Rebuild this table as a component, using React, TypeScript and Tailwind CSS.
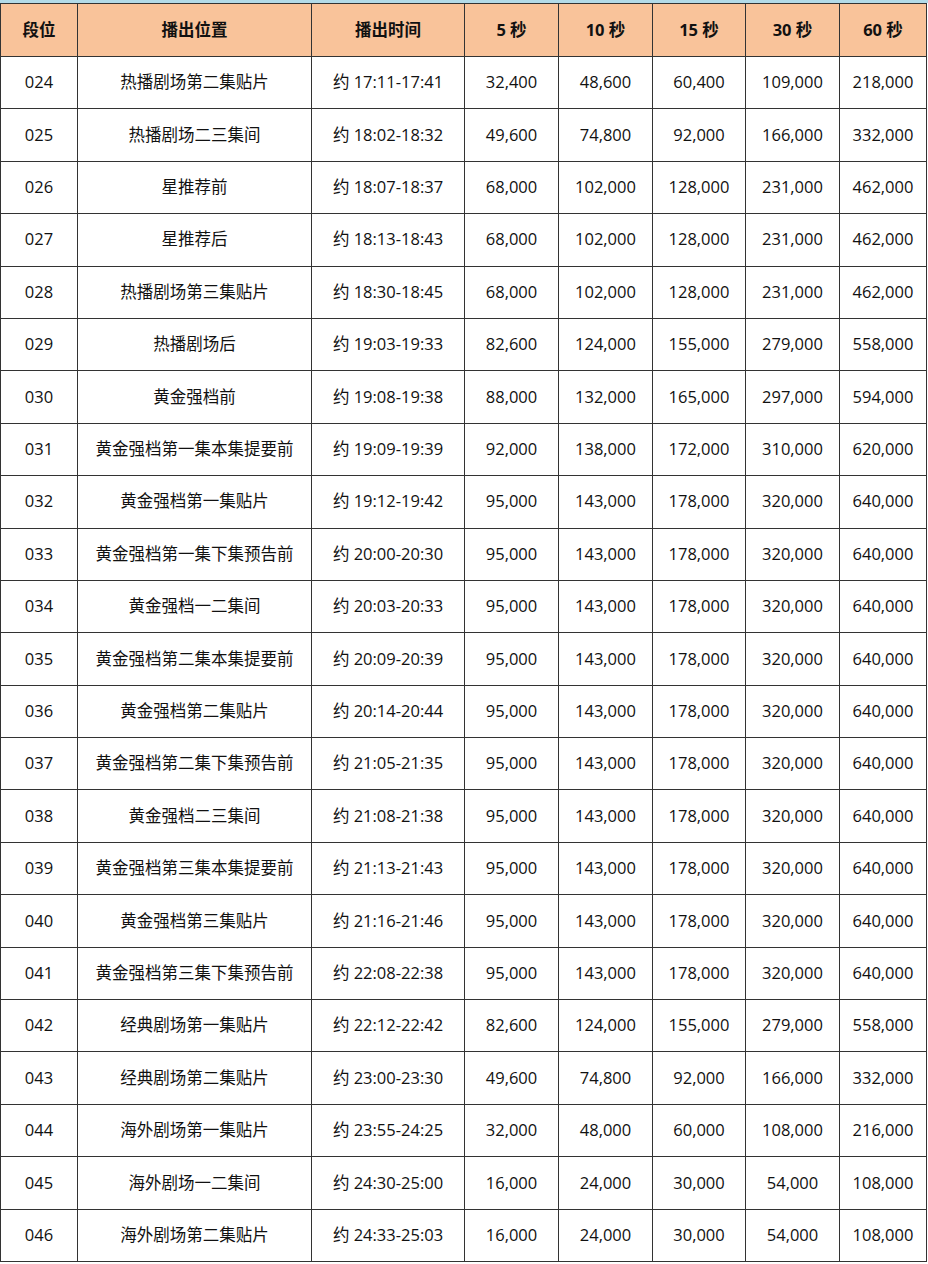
const headers = ["段位", "播出位置", "播出时间", "5 秒", "10 秒", "15 秒", "30 秒", "60 秒"];
const widths = [77, 234, 153, 94, 94, 93, 94, 87];

const rows: string[][] = [
  ["024", "热播剧场第二集贴片", "约 17:11-17:41", "32,400", "48,600", "60,400", "109,000", "218,000"],
  ["025", "热播剧场二三集间", "约 18:02-18:32", "49,600", "74,800", "92,000", "166,000", "332,000"],
  ["026", "星推荐前", "约 18:07-18:37", "68,000", "102,000", "128,000", "231,000", "462,000"],
  ["027", "星推荐后", "约 18:13-18:43", "68,000", "102,000", "128,000", "231,000", "462,000"],
  ["028", "热播剧场第三集贴片", "约 18:30-18:45", "68,000", "102,000", "128,000", "231,000", "462,000"],
  ["029", "热播剧场后", "约 19:03-19:33", "82,600", "124,000", "155,000", "279,000", "558,000"],
  ["030", "黄金强档前", "约 19:08-19:38", "88,000", "132,000", "165,000", "297,000", "594,000"],
  ["031", "黄金强档第一集本集提要前", "约 19:09-19:39", "92,000", "138,000", "172,000", "310,000", "620,000"],
  ["032", "黄金强档第一集贴片", "约 19:12-19:42", "95,000", "143,000", "178,000", "320,000", "640,000"],
  ["033", "黄金强档第一集下集预告前", "约 20:00-20:30", "95,000", "143,000", "178,000", "320,000", "640,000"],
  ["034", "黄金强档一二集间", "约 20:03-20:33", "95,000", "143,000", "178,000", "320,000", "640,000"],
  ["035", "黄金强档第二集本集提要前", "约 20:09-20:39", "95,000", "143,000", "178,000", "320,000", "640,000"],
  ["036", "黄金强档第二集贴片", "约 20:14-20:44", "95,000", "143,000", "178,000", "320,000", "640,000"],
  ["037", "黄金强档第二集下集预告前", "约 21:05-21:35", "95,000", "143,000", "178,000", "320,000", "640,000"],
  ["038", "黄金强档二三集间", "约 21:08-21:38", "95,000", "143,000", "178,000", "320,000", "640,000"],
  ["039", "黄金强档第三集本集提要前", "约 21:13-21:43", "95,000", "143,000", "178,000", "320,000", "640,000"],
  ["040", "黄金强档第三集贴片", "约 21:16-21:46", "95,000", "143,000", "178,000", "320,000", "640,000"],
  ["041", "黄金强档第三集下集预告前", "约 22:08-22:38", "95,000", "143,000", "178,000", "320,000", "640,000"],
  ["042", "经典剧场第一集贴片", "约 22:12-22:42", "82,600", "124,000", "155,000", "279,000", "558,000"],
  ["043", "经典剧场第二集贴片", "约 23:00-23:30", "49,600", "74,800", "92,000", "166,000", "332,000"],
  ["044", "海外剧场第一集贴片", "约 23:55-24:25", "32,000", "48,000", "60,000", "108,000", "216,000"],
  ["045", "海外剧场一二集间", "约 24:30-25:00", "16,000", "24,000", "30,000", "54,000", "108,000"],
  ["046", "海外剧场第二集贴片", "约 24:33-25:03", "16,000", "24,000", "30,000", "54,000", "108,000"],
];

const App = () => {
  return (
    <div
      className="w-[928px] h-[1264px] bg-white overflow-hidden"
      style={{ fontFamily: '"Open Sans", "Noto Sans CJK SC", sans-serif' }}
    >
      <div className="h-[3px] bg-[#b3dbe9]" />
      <table className="w-[927px] border-collapse table-fixed text-[16.5px] text-[#111]">
        <colgroup>
          {widths.map((w, i) => (
            <col key={i} style={{ width: w }} />
          ))}
        </colgroup>
        <thead>
          <tr className="h-[53px] bg-[#f9c39a]">
            {headers.map((h) => (
              <th
                key={h}
                className="border border-[#333] font-bold text-center align-middle p-0"
              >
                {h}
              </th>
            ))}
          </tr>
        </thead>
        <tbody>
          {rows.map((r) => (
            <tr key={r[0]} className="h-[52.4px]">
              {r.map((c, i) => (
                <td
                  key={i}
                  className="border border-[#333] text-center align-middle p-0 whitespace-nowrap"
                >
                  {c}
                </td>
              ))}
            </tr>
          ))}
        </tbody>
      </table>
    </div>
  );
};

export default App;
